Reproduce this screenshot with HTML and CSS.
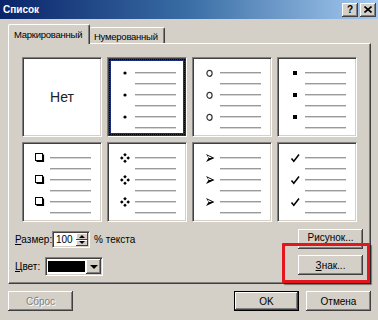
FILE: index.html
```html
<!DOCTYPE html>
<html>
<head>
<meta charset="utf-8">
<link rel="stylesheet" href="styles.css">
</head>
<body>
<div class="dlg">
  <div class="titlebar">
    <span class="title">Список</span>
    <div class="capbtns">
      <span class="capbtn q">?</span>
      <span class="capbtn"><svg width="8" height="7" viewBox="0 0 8 7"><path d="M0.5 0.5 L7.5 6.5 M7.5 0.5 L0.5 6.5" stroke="#000" stroke-width="1.6"/></svg></span>
    </div>
  </div>

  <div class="tabs">
    <div class="tab active">Маркированный</div>
    <div class="tab">Нумерованный</div>
  </div>

  <div class="panel">
    <div class="grid">
      <div class="cell none">Нет</div>

      <div class="cell sel">
        <div class="r"><span class="b"><svg width="10" height="10" viewBox="0 0 10 10"><circle cx="5" cy="5" r="1.6" fill="#000"/></svg></span><span class="ln"></span></div>
        <div class="r"><span class="b"></span><span class="ln"></span></div>
        <div class="r"><span class="b"><svg width="10" height="10" viewBox="0 0 10 10"><circle cx="5" cy="5" r="1.6" fill="#000"/></svg></span><span class="ln"></span></div>
        <div class="r"><span class="b"></span><span class="ln"></span></div>
        <div class="r"><span class="b"><svg width="10" height="10" viewBox="0 0 10 10"><circle cx="5" cy="5" r="1.6" fill="#000"/></svg></span><span class="ln"></span></div>
        <div class="r"><span class="b"></span><span class="ln"></span></div>
      </div>

      <div class="cell">
        <div class="r"><span class="b"><svg width="10" height="10" viewBox="0 0 10 10"><ellipse cx="4.5" cy="5.3" rx="2.6" ry="3" fill="none" stroke="#333" stroke-width="1.2"/></svg></span><span class="ln"></span></div>
        <div class="r"><span class="b"></span><span class="ln"></span></div>
        <div class="r"><span class="b"><svg width="10" height="10" viewBox="0 0 10 10"><ellipse cx="4.5" cy="5.3" rx="2.6" ry="3" fill="none" stroke="#333" stroke-width="1.2"/></svg></span><span class="ln"></span></div>
        <div class="r"><span class="b"></span><span class="ln"></span></div>
        <div class="r"><span class="b"><svg width="10" height="10" viewBox="0 0 10 10"><ellipse cx="4.5" cy="5.3" rx="2.6" ry="3" fill="none" stroke="#333" stroke-width="1.2"/></svg></span><span class="ln"></span></div>
        <div class="r"><span class="b"></span><span class="ln"></span></div>
      </div>

      <div class="cell">
        <div class="r"><span class="b"><svg width="10" height="10" viewBox="0 0 10 10"><rect x="3" y="3" width="4" height="4" fill="#000"/></svg></span><span class="ln"></span></div>
        <div class="r"><span class="b"></span><span class="ln"></span></div>
        <div class="r"><span class="b"><svg width="10" height="10" viewBox="0 0 10 10"><rect x="3" y="3" width="4" height="4" fill="#000"/></svg></span><span class="ln"></span></div>
        <div class="r"><span class="b"></span><span class="ln"></span></div>
        <div class="r"><span class="b"><svg width="10" height="10" viewBox="0 0 10 10"><rect x="3" y="3" width="4" height="4" fill="#000"/></svg></span><span class="ln"></span></div>
        <div class="r"><span class="b"></span><span class="ln"></span></div>
      </div>

      <div class="cell">
        <div class="r"><span class="b"><svg width="10" height="10" viewBox="0 0 10 10"><rect x="0.5" y="0.5" width="7" height="7" fill="#fff" stroke="#000"/><path d="M8.5 1.5 V8.5 H1.5" fill="none" stroke="#000" stroke-width="1.2"/></svg></span><span class="ln"></span></div>
        <div class="r"><span class="b"></span><span class="ln"></span></div>
        <div class="r"><span class="b"><svg width="10" height="10" viewBox="0 0 10 10"><rect x="0.5" y="0.5" width="7" height="7" fill="#fff" stroke="#000"/><path d="M8.5 1.5 V8.5 H1.5" fill="none" stroke="#000" stroke-width="1.2"/></svg></span><span class="ln"></span></div>
        <div class="r"><span class="b"></span><span class="ln"></span></div>
        <div class="r"><span class="b"><svg width="10" height="10" viewBox="0 0 10 10"><rect x="0.5" y="0.5" width="7" height="7" fill="#fff" stroke="#000"/><path d="M8.5 1.5 V8.5 H1.5" fill="none" stroke="#000" stroke-width="1.2"/></svg></span><span class="ln"></span></div>
        <div class="r"><span class="b"></span><span class="ln"></span></div>
      </div>

      <div class="cell">
        <div class="r"><span class="b"><svg width="10" height="10" viewBox="0 0 10 10"><path d="M5 0 L6.8 1.8 L5 3.6 L3.2 1.8 Z M1.8 3.2 L3.6 5 L1.8 6.8 L0 5 Z M8.2 3.2 L10 5 L8.2 6.8 L6.4 5 Z M5 6.4 L6.8 8.2 L5 10 L3.2 8.2 Z" fill="#000"/></svg></span><span class="ln"></span></div>
        <div class="r"><span class="b"></span><span class="ln"></span></div>
        <div class="r"><span class="b"><svg width="10" height="10" viewBox="0 0 10 10"><path d="M5 0 L6.8 1.8 L5 3.6 L3.2 1.8 Z M1.8 3.2 L3.6 5 L1.8 6.8 L0 5 Z M8.2 3.2 L10 5 L8.2 6.8 L6.4 5 Z M5 6.4 L6.8 8.2 L5 10 L3.2 8.2 Z" fill="#000"/></svg></span><span class="ln"></span></div>
        <div class="r"><span class="b"></span><span class="ln"></span></div>
        <div class="r"><span class="b"><svg width="10" height="10" viewBox="0 0 10 10"><path d="M5 0 L6.8 1.8 L5 3.6 L3.2 1.8 Z M1.8 3.2 L3.6 5 L1.8 6.8 L0 5 Z M8.2 3.2 L10 5 L8.2 6.8 L6.4 5 Z M5 6.4 L6.8 8.2 L5 10 L3.2 8.2 Z" fill="#000"/></svg></span><span class="ln"></span></div>
        <div class="r"><span class="b"></span><span class="ln"></span></div>
      </div>

      <div class="cell">
        <div class="r"><span class="b"><svg width="10" height="10" viewBox="0 0 10 10"><path d="M1 1 L9.5 5 L1 9 L3.5 5 Z" fill="#000"/><path d="M2.6 2.6 L7 5 L3.8 5 Z" fill="#fff"/></svg></span><span class="ln"></span></div>
        <div class="r"><span class="b"></span><span class="ln"></span></div>
        <div class="r"><span class="b"><svg width="10" height="10" viewBox="0 0 10 10"><path d="M1 1 L9.5 5 L1 9 L3.5 5 Z" fill="#000"/><path d="M2.6 2.6 L7 5 L3.8 5 Z" fill="#fff"/></svg></span><span class="ln"></span></div>
        <div class="r"><span class="b"></span><span class="ln"></span></div>
        <div class="r"><span class="b"><svg width="10" height="10" viewBox="0 0 10 10"><path d="M1 1 L9.5 5 L1 9 L3.5 5 Z" fill="#000"/><path d="M2.6 2.6 L7 5 L3.8 5 Z" fill="#fff"/></svg></span><span class="ln"></span></div>
        <div class="r"><span class="b"></span><span class="ln"></span></div>
      </div>

      <div class="cell">
        <div class="r"><span class="b"><svg width="10" height="10" viewBox="0 0 10 10"><path d="M1.5 5.5 L3.8 8.3 L9 1.5" fill="none" stroke="#000" stroke-width="1.5"/></svg></span><span class="ln"></span></div>
        <div class="r"><span class="b"></span><span class="ln"></span></div>
        <div class="r"><span class="b"><svg width="10" height="10" viewBox="0 0 10 10"><path d="M1.5 5.5 L3.8 8.3 L9 1.5" fill="none" stroke="#000" stroke-width="1.5"/></svg></span><span class="ln"></span></div>
        <div class="r"><span class="b"></span><span class="ln"></span></div>
        <div class="r"><span class="b"><svg width="10" height="10" viewBox="0 0 10 10"><path d="M1.5 5.5 L3.8 8.3 L9 1.5" fill="none" stroke="#000" stroke-width="1.5"/></svg></span><span class="ln"></span></div>
        <div class="r"><span class="b"></span><span class="ln"></span></div>
      </div>
    </div>

    <div class="opts">
      <div class="left">
        <div class="row">
          <span class="lbl w37"><u>Р</u>азмер:</span>
          <div class="spin">
            <span class="val">100</span>
            <div class="spinbtns">
              <span class="sb"><span class="tri up"></span></span>
              <span class="sb"><span class="tri dn"></span></span>
            </div>
          </div>
          <span class="lbl pct">% текста</span>
        </div>
        <div class="row r2">
          <span class="lbl w30"><u>Ц</u>вет:</span>
          <div class="combo">
            <span class="swatch"></span>
            <span class="drop"><span class="tri dn"></span></span>
          </div>
        </div>
      </div>
      <div class="right">
        <div class="btn up1">Рисунок...</div>
        <div class="btn"><u>З</u>нак...</div>
      </div>
    </div>
  </div>

  <div class="footer">
    <div class="btn disabled">Сброс</div>
    <div class="grp">
      <div class="btn default">OK</div>
      <div class="btn">Отмена</div>
    </div>
  </div>

  <div class="highlight"></div>
</div>
</body>
</html>
```

FILE: styles.css
```css
* { box-sizing: border-box; }
body {
  margin: 0;
  background: #d4d0c8;
  font-family: "Liberation Sans", Arial, sans-serif;
  font-size: 10px;
  color: #000;
}
.dlg {
  position: relative;
  width: 378px;
  height: 320px;
  overflow: hidden;
  background: #d4d0c8;
}
.titlebar {
  height: 19px;
  background: linear-gradient(to right, #0a246a 0%, #3a6ea5 50%, #a6caf0 100%);
  display: flex;
  align-items: center;
  justify-content: space-between;
  padding: 0 2px 0 3px;
}
.title {
  color: #fff;
  font-weight: bold;
  font-size: 10px;
}
.capbtns { display: flex; gap: 2px; }
.capbtn {
  width: 16px;
  height: 14px;
  background: #d4d0c8;
  box-shadow: inset -1px -1px #404040, inset 1px 1px #fff, inset -2px -2px #808080;
  display: flex;
  align-items: center;
  justify-content: center;
  font-weight: bold;
  font-size: 10px;
  line-height: 1;
}
.capbtn.q { padding-top: 1px; }

.tabs {
  display: flex;
  align-items: flex-end;
  height: 24px;
  padding-left: 8px;
  position: relative;
  z-index: 2;
}
.tab {
  background: #d4d0c8;
  border-top: 1px solid #fff;
  border-right: 1px solid #404040;
  box-shadow: inset -1px 0 #808080;
  border-radius: 2px 2px 0 0;
  white-space: nowrap;
  font-size: 9.5px;
  letter-spacing: -0.25px;
}
.tab.active {
  width: 82px;
  height: 20px;
  margin-bottom: -1px;
  border-left: 1px solid #fff;
  padding: 4px 0 0 5px;
}
.tab:not(.active) {
  width: 75px;
  height: 16px;
  padding: 3px 0 0 4px;
}

.panel {
  margin-left: 8px;
  width: 363px;
  height: 241px;
  border-top: 1px solid #fff;
  border-left: 1px solid #fff;
  border-right: 1px solid #404040;
  border-bottom: 1px solid #404040;
  box-shadow: inset -1px -1px #808080;
  position: relative;
  z-index: 1;
}
.grid {
  margin: 13px 0 0 13px;
  display: grid;
  grid-template-columns: repeat(4, 80px);
  grid-auto-rows: 80px;
  gap: 5px;
}
.cell {
  background: #fff;
  border-top: 1px solid #808080;
  border-left: 1px solid #808080;
  border-right: 1px solid #fff;
  border-bottom: 1px solid #fff;
  box-shadow: inset 1px 1px #404040, inset -1px -1px #d4d0c8;
  padding-top: 9px;
  position: relative;
}
.cell.none {
  padding: 0;
  display: flex;
  align-items: center;
  justify-content: center;
  font-size: 14px;
  color: #222;
}
.cell.sel {
  box-shadow: inset 1px 1px #404040, inset 0 0 0 3px #1a2f80;
}
.cell.sel::after {
  content: "";
  position: absolute;
  inset: 1px;
  border: 1px dotted #000;
}
.r {
  height: 11px;
  display: flex;
  align-items: center;
}
.b {
  width: 27px;
  height: 10px;
  padding-left: 12px;
  display: flex;
}
.ln {
  width: 41px;
  height: 2px;
  background: linear-gradient(#9a9a9a 0 1px, #d6d6d6 1px 2px);
}

.opts {
  display: flex;
  justify-content: space-between;
  margin-top: 7px;
  padding: 0 7px 0 6px;
}
.left {
  display: flex;
  flex-direction: column;
  gap: 9px;
  padding-top: 2px;
}
.row {
  display: flex;
  align-items: center;
  height: 17px;
}
.row.r2 { height: 19px; }
.lbl { white-space: nowrap; }
.w37 { width: 37px; }
.w30 { width: 30px; }
.pct { margin-left: 4px; }
.spin {
  width: 38px;
  height: 17px;
  background: #fff;
  border-top: 1px solid #808080;
  border-left: 1px solid #808080;
  border-right: 1px solid #fff;
  border-bottom: 1px solid #fff;
  box-shadow: inset 1px 1px #404040, inset -1px -1px #d4d0c8;
  display: flex;
  align-items: center;
  padding: 1px;
}
.val { flex: 1; padding-left: 2px; }
.spinbtns {
  width: 12px;
  height: 13px;
  display: flex;
  flex-direction: column;
}
.sb {
  flex: 1;
  background: #d4d0c8;
  box-shadow: inset -1px -1px #404040, inset 1px 1px #fff;
  display: flex;
  align-items: center;
  justify-content: center;
}
.tri {
  width: 0;
  height: 0;
  border-left: 3px solid transparent;
  border-right: 3px solid transparent;
}
.tri.up { border-bottom: 3px solid #000; }
.tri.dn { border-top: 3px solid #000; }
.drop .tri.dn {
  border-left-width: 4px;
  border-right-width: 4px;
  border-top-width: 4px;
}
.combo {
  width: 58px;
  height: 19px;
  background: #fff;
  border-top: 1px solid #808080;
  border-left: 1px solid #808080;
  border-right: 1px solid #fff;
  border-bottom: 1px solid #fff;
  box-shadow: inset 1px 1px #404040, inset -1px -1px #d4d0c8;
  display: flex;
  align-items: center;
  padding: 1px 1px 1px 2px;
}
.swatch {
  flex: 1;
  height: 11px;
  background: #000;
  margin-right: 1px;
}
.drop {
  width: 15px;
  height: 15px;
  background: #d4d0c8;
  box-shadow: inset -1px -1px #404040, inset 1px 1px #fff, inset -2px -2px #808080;
  display: flex;
  align-items: center;
  justify-content: center;
}
.right {
  display: flex;
  flex-direction: column;
  gap: 6px;
}
.btn {
  width: 65px;
  height: 20px;
  background: #d4d0c8;
  box-shadow: inset -1px -1px #404040, inset 1px 1px #fff, inset -2px -2px #808080;
  display: flex;
  align-items: center;
  justify-content: center;
  white-space: nowrap;
}
.btn.up1 { padding-bottom: 3px; }
.btn.default {
  border: 1px solid #000;
}
.btn.disabled {
  color: #808080;
  text-shadow: 1px 1px #fff;
}
.footer {
  display: flex;
  justify-content: space-between;
  margin-top: 7px;
  padding: 0 7px 0 8px;
}
.grp { display: flex; gap: 7px; }

.highlight {
  position: absolute;
  left: 282px;
  top: 243px;
  width: 88px;
  height: 40px;
  border: 3px solid #e3161d;
  border-radius: 1px;
  box-shadow: 2px 2px 1px rgba(0, 0, 0, 0.45);
  z-index: 5;
}
```
